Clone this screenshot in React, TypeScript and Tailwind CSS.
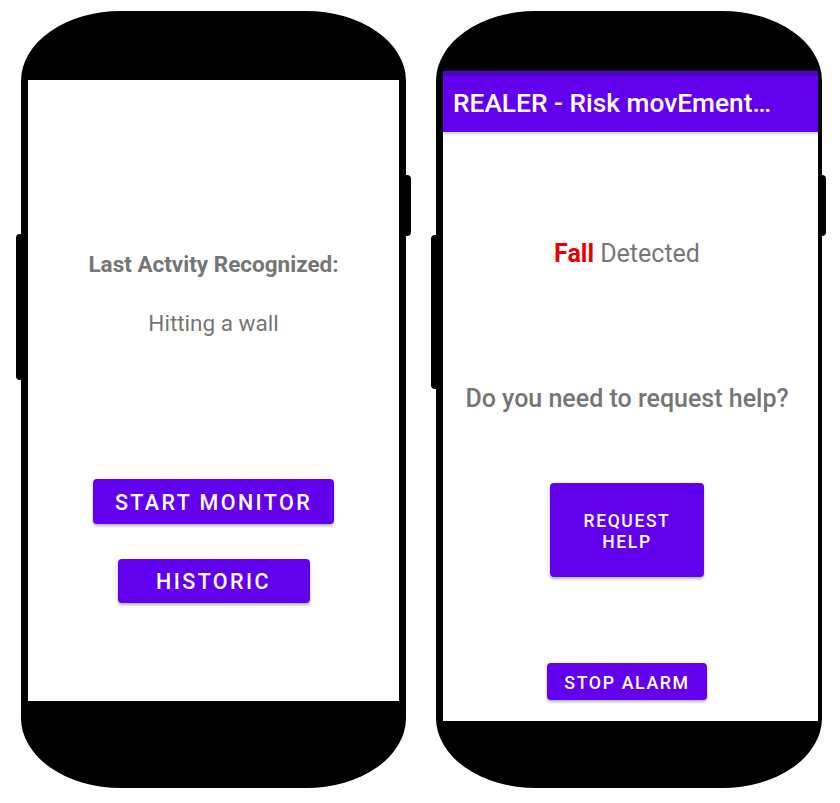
import React from "react";

const font = { fontFamily: "Roboto, 'Noto Sans', sans-serif" };

const PhoneButton = ({ label, className }: { label: React.ReactNode; className: string }) => (
  <button
    className={`bg-[#6200EE] text-white font-medium uppercase rounded-[4px] shadow-[0_2px_3px_rgba(0,0,0,0.3)] flex items-center justify-center text-center pt-[3px] ${className}`}
  >
    {label}
  </button>
);

const App = () => {
  return (
    <div className="w-[840px] h-[803px] bg-white flex pt-[11px] pl-[21px] gap-[30px]" style={font}>
      {/* left phone */}
      <div className="relative w-[385px] h-[777px] bg-black rounded-[100px/70px] pt-[69px] pb-[87px] px-[7px]">
        <div className="absolute left-[-5px] top-[223px] w-[6px] h-[146px] bg-black rounded-l-[4px]" />
        <div className="absolute right-[-5px] top-[164px] w-[6px] h-[61px] bg-black rounded-r-[4px]" />
        <div className="h-full bg-white flex flex-col items-center">
          <p className="mt-[170px] text-[22.5px] leading-[28px] font-bold text-[#757575]">
            Last Actvity Recognized:
          </p>
          <p className="mt-[31px] text-[22.5px] leading-[28px] text-[#757575]">Hitting a wall</p>
          <PhoneButton
            label="Start Monitor"
            className="mt-[142px] w-[241px] h-[45px] text-[21.5px] tracking-[2.4px]"
          />
          <PhoneButton
            label="Historic"
            className="mt-[35px] w-[192px] h-[44px] text-[21.5px] tracking-[2.4px]"
          />
        </div>
      </div>

      {/* right phone */}
      <div className="relative w-[386px] h-[777px] bg-black rounded-[100px/70px] pt-[60px] pb-[67px] pl-[7px] pr-[4px]">
        <div className="absolute left-[-5px] top-[224px] w-[6px] h-[154px] bg-black rounded-l-[4px]" />
        <div className="absolute right-[-4px] top-[164px] w-[6px] h-[61px] bg-black rounded-r-[4px]" />
        <div className="h-full bg-white flex flex-col">
          <div className="w-full h-[5px] bg-[#5000C8]" />
          <div className="w-full h-[56px] bg-[#6200EE] flex items-center pl-[10px] shadow-[0_2px_3px_rgba(0,0,0,0.2)]">
            <span className="text-white text-[26.3px] font-medium">REALER - Risk movEment…</span>
          </div>
          <div className="flex flex-col items-center pr-[7px]">
            <p className="mt-[107px] text-[25px] leading-[30px] text-[#757575]">
              <span className="font-bold text-[#E60000]">Fall</span> Detected
            </p>
            <p className="mt-[115px] text-[25px] leading-[30px] font-medium text-[#757575]">
              Do you need to request help?
            </p>
            <PhoneButton
              label={
                <span>
                  Request
                  <br />
                  Help
                </span>
              }
              className="mt-[69px] w-[154px] h-[94px] text-[17.5px] leading-[21px] tracking-[1.6px]"
            />
            <PhoneButton
              label="Stop Alarm"
              className="mt-[86px] w-[160px] h-[37px] text-[17.8px] tracking-[1.6px]"
            />
          </div>
        </div>
      </div>
    </div>
  );
};

export default App;
